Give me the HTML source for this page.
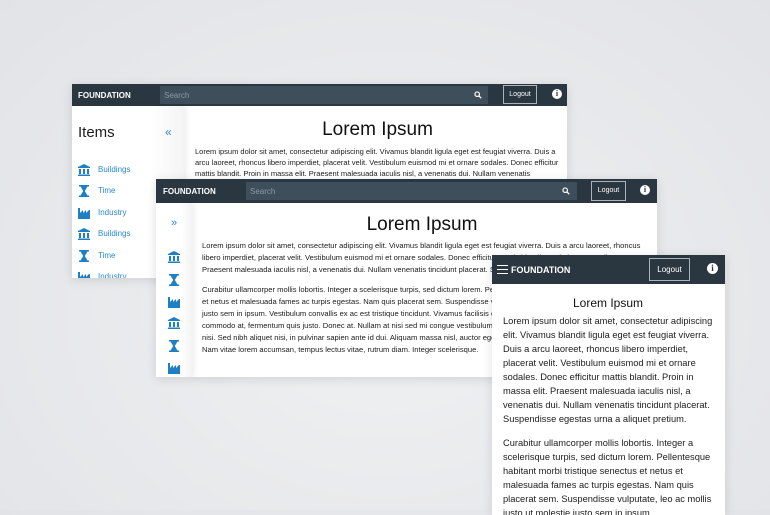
<!DOCTYPE html>
<html><head><style>
*{margin:0;padding:0;box-sizing:border-box}
body{width:770px;height:510px;overflow:hidden;background:radial-gradient(ellipse at 50% 60%,#f0f1f3 0%,#e6e7ea 70%,#e2e3e7 100%);font-family:"Liberation Sans",sans-serif;position:relative}
.win{position:absolute;background:#fff;overflow:hidden;box-shadow:0 2px 10px rgba(0,0,0,.12)}
.hdr{position:absolute;left:0;top:0;right:0;background:#2b3740;color:#fff}
.brand{position:absolute;font-weight:bold;color:#fff}
.search{position:absolute;background:#3e4e5b;color:#8c99a3}
.logout{position:absolute;border:1px solid #aab3ba;color:#fff;text-align:center}
.info{position:absolute;background:#fff;border-radius:50%;color:#2b3740;font-weight:bold;font-family:"Liberation Serif",serif;text-align:center}
.side{position:absolute;left:0;bottom:0;background:linear-gradient(90deg,#fff 70%,#f4f4f5);box-shadow:2px 0 6px rgba(0,0,0,.08)}
.txt{position:absolute;color:#1c1c1c}
.nav{position:absolute;font-size:8px;color:#2a8ad0}
svg{position:absolute}
h1{font-weight:normal;text-align:center;color:#111}
p{margin-bottom:8px}
</style></head><body>

<svg width="0" height="0" style="position:absolute"><defs>
<symbol id="bank" viewBox="0 0 12 12"><path d="M6 0L0 3v1h12V3z M1 5h2v5H1z M5 5h2v5H5z M9 5h2v5H9z M0 10.5h12V12H0z" fill="#1f7fc4"/></symbol>
<symbol id="hour" viewBox="0 0 12 12"><path d="M1 0h10v1.5H9.5L6.8 6l2.7 4.5H11V12H1v-1.5h1.5L5.2 6 2.5 1.5H1z" fill="#1f7fc4"/></symbol>
<symbol id="fact" viewBox="0 0 12 12"><path d="M0 1h2v5l3-3v3l3-3v3l3-3h1v11H0z" fill="#1f7fc4"/></symbol>
<symbol id="mag" viewBox="0 0 10 10"><circle cx="4" cy="4" r="2.8" stroke="#fff" stroke-width="1.5" fill="none"/><path d="M6 6l3 3" stroke="#fff" stroke-width="1.7"/></symbol>
</defs></svg>

<!-- Window 1 -->
<div class="win" style="left:72px;top:84px;width:495px;height:194px">
 <div class="hdr" style="height:22px">
  <div class="brand" style="left:6px;top:7px;font-size:8px">FOUNDATION</div>
  <div class="search" style="left:88px;top:2px;width:328px;height:18px;font-size:8px;padding:5px 4px">Search</div>
  <svg style="left:402px;top:7px" width="8" height="8"><use href="#mag"/></svg>
  <div class="logout" style="left:431px;top:1px;width:34px;height:19px;font-size:7px;line-height:17px">Logout</div>
  <div class="info" style="left:480px;top:5px;width:10px;height:10px;font-size:8px;line-height:10px">i</div>
 </div>
 <div class="side" style="top:22px;width:112px">
  <div class="txt" style="left:6px;top:18px;font-size:15px">Items</div>
  <div class="nav" style="left:93px;top:19px;font-size:12px">«</div>
  <svg style="left:6px;top:58px" width="12" height="12"><use href="#bank"/></svg><div class="nav" style="left:26px;top:59px">Buildings</div>
  <svg style="left:6px;top:79px" width="12" height="12"><use href="#hour"/></svg><div class="nav" style="left:26px;top:80px">Time</div>
  <svg style="left:6px;top:101px" width="12" height="12"><use href="#fact"/></svg><div class="nav" style="left:26px;top:102px">Industry</div>
  <svg style="left:6px;top:122px" width="12" height="12"><use href="#bank"/></svg><div class="nav" style="left:26px;top:123px">Buildings</div>
  <svg style="left:6px;top:144px" width="12" height="12"><use href="#hour"/></svg><div class="nav" style="left:26px;top:145px">Time</div>
  <svg style="left:6px;top:165px" width="12" height="12"><use href="#fact"/></svg><div class="nav" style="left:26px;top:166px">Industry</div>
 </div>
 <div class="txt" style="left:123px;top:35px;width:365px">
  <h1 style="font-size:19px;margin-bottom:5px">Lorem Ipsum</h1>
  <div style="font-size:7.5px;line-height:11px">Lorem ipsum dolor sit amet, consectetur adipiscing elit. Vivamus blandit ligula eget est feugiat viverra. Duis a arcu laoreet, rhoncus libero imperdiet, placerat velit. Vestibulum euismod mi et ornare sodales. Donec efficitur mattis blandit. Proin in massa elit. Praesent malesuada iaculis nisl, a venenatis dui. Nullam venenatis tincidunt placerat.</div>
 </div>
</div>

<!-- Window 2 -->
<div class="win" style="left:156px;top:179px;width:501px;height:198px">
 <div class="hdr" style="height:24px">
  <div class="brand" style="left:7px;top:8px;font-size:8px">FOUNDATION</div>
  <div class="search" style="left:90px;top:3px;width:331px;height:18px;font-size:8px;padding:5px 4px">Search</div>
  <svg style="left:406px;top:8px" width="8" height="8"><use href="#mag"/></svg>
  <div class="logout" style="left:435px;top:2px;width:35px;height:20px;font-size:7px;line-height:18px">Logout</div>
  <div class="info" style="left:484px;top:6px;width:10px;height:10px;font-size:8px;line-height:10px">i</div>
 </div>
 <div class="side" style="top:24px;width:36px">
  <div class="nav" style="left:15px;top:14px;font-size:11px">»</div>
  <svg style="left:12px;top:48px" width="12" height="12"><use href="#bank"/></svg>
  <svg style="left:12px;top:71px" width="12" height="12"><use href="#hour"/></svg>
  <svg style="left:12px;top:93px" width="12" height="12"><use href="#fact"/></svg>
  <svg style="left:12px;top:114px" width="12" height="12"><use href="#bank"/></svg>
  <svg style="left:12px;top:137px" width="12" height="12"><use href="#hour"/></svg>
  <svg style="left:12px;top:159px" width="12" height="12"><use href="#fact"/></svg>
 </div>
 <div class="txt" style="left:46px;top:35px;width:440px">
  <h1 style="font-size:19px;margin-bottom:4px">Lorem Ipsum</h1>
  <div style="font-size:7.6px;line-height:12px">
  <p>Lorem ipsum dolor sit amet, consectetur adipiscing elit. Vivamus blandit ligula eget est feugiat viverra. Duis a arcu laoreet, rhoncus libero imperdiet, placerat velit. Vestibulum euismod mi et ornare sodales. Donec efficitur mattis blandit. Proin in massa elit. Praesent malesuada iaculis nisl, a venenatis dui. Nullam venenatis tincidunt placerat. Suspendisse egestas urna a aliquet pretium.</p>
  <p>Curabitur ullamcorper mollis lobortis. Integer a scelerisque turpis, sed dictum lorem. Pellentesque habitant morbi tristique senectus et netus et malesuada fames ac turpis egestas. Nam quis placerat sem. Suspendisse vulputate, leo ac mollis justo, ut molestie justo sem in ipsum. Vestibulum convallis ex ac est tristique tincidunt. Vivamus facilisis erat. Nam lorem nibh, elementum semper commodo at, fermentum quis justo. Donec at. Nullam at nisi sed mi congue vestibulum. Vivamus nec scelerisque orci, vel fringilla nisi. Sed nibh aliquet nisi, in pulvinar sapien ante id dui. Aliquam massa nisl, auctor eget nisl in, faucibus turpis finibus egestas. Nam vitae lorem accumsan, tempus lectus vitae, rutrum diam. Integer scelerisque.</p>
  </div>
 </div>
</div>

<!-- Window 3 -->
<div class="win" style="left:492px;top:255px;width:233px;height:260px">
 <div class="hdr" style="height:29px">
  <div style="position:absolute;left:5px;top:10px;width:11px;height:9px;border-top:1.5px solid #fff;border-bottom:1.5px solid #fff"><div style="margin-top:2.5px;height:1.5px;background:#fff"></div></div>
  <div class="brand" style="left:19px;top:10px;font-size:9px">FOUNDATION</div>
  <div class="logout" style="left:157px;top:3px;width:41px;height:23px;font-size:8px;line-height:21px">Logout</div>
  <div class="info" style="left:215px;top:8px;width:11px;height:11px;font-size:9px;line-height:11px">i</div>
 </div>
 <div class="txt" style="left:11px;top:41px;width:210px">
  <h1 style="font-size:12px;margin-bottom:4px">Lorem Ipsum</h1>
  <div style="font-size:9.3px;line-height:14px">
  <p style="margin-bottom:10px">Lorem ipsum dolor sit amet, consectetur adipiscing elit. Vivamus blandit ligula eget est feugiat viverra. Duis a arcu laoreet, rhoncus libero imperdiet, placerat velit. Vestibulum euismod mi et ornare sodales. Donec efficitur mattis blandit. Proin in massa elit. Praesent malesuada iaculis nisl, a venenatis dui. Nullam venenatis tincidunt placerat. Suspendisse egestas urna a aliquet pretium.</p>
  <p>Curabitur ullamcorper mollis lobortis. Integer a scelerisque turpis, sed dictum lorem. Pellentesque habitant morbi tristique senectus et netus et malesuada fames ac turpis egestas. Nam quis placerat sem. Suspendisse vulputate, leo ac mollis justo ut molestie justo sem in ipsum.</p>
  </div>
 </div>
</div>
</body></html>
